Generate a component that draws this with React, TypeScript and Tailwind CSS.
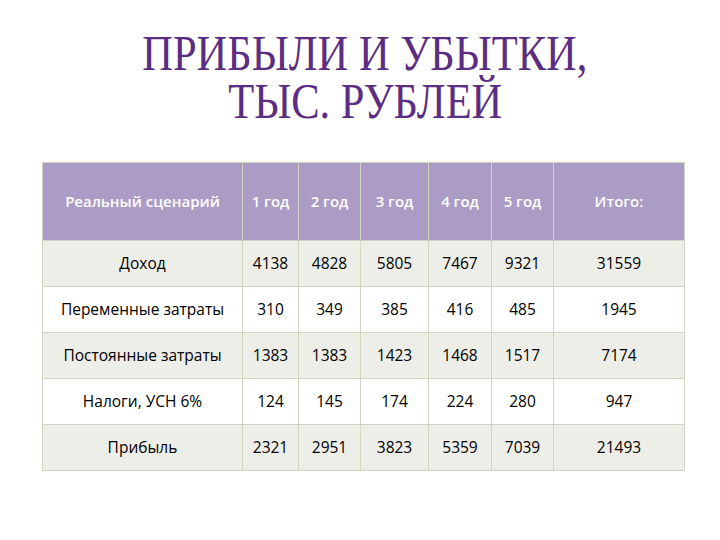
import React from "react";

const rows: { label: string; vals: string[]; shade: boolean }[] = [
  { label: "Доход", vals: ["4138", "4828", "5805", "7467", "9321", "31559"], shade: true },
  { label: "Переменные затраты", vals: ["310", "349", "385", "416", "485", "1945"], shade: false },
  { label: "Постоянные затраты", vals: ["1383", "1383", "1423", "1468", "1517", "7174"], shade: true },
  { label: "Налоги, УСН 6%", vals: ["124", "145", "174", "224", "280", "947"], shade: false },
  { label: "Прибыль", vals: ["2321", "2951", "3823", "5359", "7039", "21493"], shade: true },
];

const widths = ["w-[200px]", "w-[56px]", "w-[62px]", "w-[68px]", "w-[63px]", "w-[62px]", "w-[131px]"];

export default function App() {
  return (
    <div className="w-[720px] h-[540px] bg-white relative overflow-hidden">
      <div className="pt-[29px] pl-[10px] flex flex-col items-center text-[#5b2d83] text-[50px] leading-[48px] [font-family:'Liberation_Serif',serif]">
        <div className="scale-x-[0.85] whitespace-nowrap">ПРИБЫЛИ И УБЫТКИ,</div>
        <div className="scale-x-[0.85] whitespace-nowrap">ТЫС. РУБЛЕЙ</div>
      </div>
      <div className="ml-[42px] mt-[37px] w-[642px]">
        <table className="border-collapse [font-family:'Open_Sans',sans-serif] table-fixed w-[642px]">
          <thead>
            <tr className="bg-[#ab9cc6] h-[78px] text-white text-[15px]">
              {["Реальный сценарий", "1 год", "2 год", "3 год", "4 год", "5 год", "Итого:"].map((h, i) => (
                <th key={i} className={`${widths[i]} font-semibold border border-[#d0d4c0] text-center p-0`}>
                  {h}
                </th>
              ))}
            </tr>
          </thead>
          <tbody>
            {rows.map((r, i) => (
              <tr key={i} className={`h-[46px] text-[15.5px] text-black ${r.shade ? "bg-[#eeeee8]" : "bg-white"}`}>
                <td className="border border-[#d0d4c0] text-center p-0">{r.label}</td>
                {r.vals.map((v, j) => (
                  <td key={j} className="border border-[#d0d4c0] text-center p-0">
                    {v}
                  </td>
                ))}
              </tr>
            ))}
          </tbody>
        </table>
      </div>
    </div>
  );
}
